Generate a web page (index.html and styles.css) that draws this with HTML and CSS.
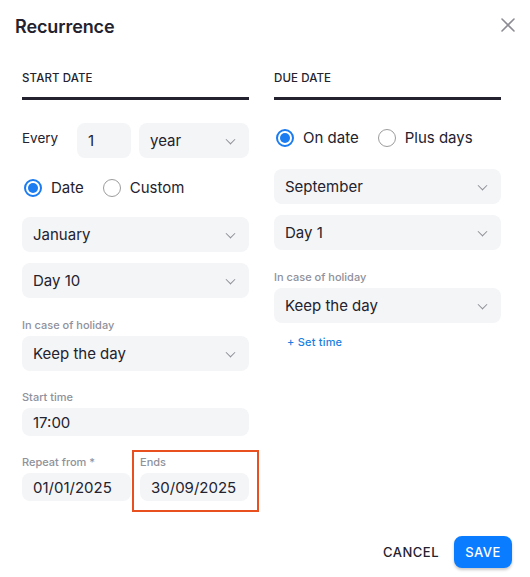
FILE: index.html
```html
<!DOCTYPE html>
<html>
<head>
<meta charset="utf-8">
<link rel="stylesheet" href="styles.css">
</head>
<body>
<div class="dialog">
  <header class="head">
    <h1 class="title">Recurrence</h1>
    <button class="close" aria-label="Close">
      <svg width="14" height="14" viewBox="0 0 14 14"><path d="M1 1L13 13M13 1L1 13" stroke="#8c8c94" stroke-width="1.6" stroke-linecap="round"/></svg>
    </button>
  </header>
  <main class="cols">
    <section class="col">
      <div class="tab">START DATE</div>
      <div class="every">
        <span class="every-label">Every</span>
        <div class="field num">1</div>
        <div class="field select">year<span class="chev"></span></div>
      </div>
      <div class="radios r-left">
        <label class="radio"><span class="dot on"></span>Date</label>
        <label class="radio"><span class="dot"></span>Custom</label>
      </div>
      <div class="field select s-jan">January<span class="chev"></span></div>
      <div class="field select s-day">Day 10<span class="chev"></span></div>
      <div class="lbl l1">In case of holiday</div>
      <div class="field select">Keep the day<span class="chev"></span></div>
      <div class="lbl l2">Start time</div>
      <div class="field small">17:00</div>
      <div class="pair">
        <div class="cell">
          <div class="lbl">Repeat from *</div>
          <div class="field small">01/01/2025</div>
        </div>
        <div class="cell ends">
          <div class="lbl">Ends</div>
          <div class="field small">30/09/2025</div>
          <div class="mark"></div>
        </div>
      </div>
    </section>
    <section class="col">
      <div class="tab">DUE DATE</div>
      <div class="radios r-right">
        <label class="radio"><span class="dot on"></span>On date</label>
        <label class="radio"><span class="dot"></span>Plus days</label>
      </div>
      <div class="field select s-sep">September<span class="chev"></span></div>
      <div class="field select s-day">Day 1<span class="chev"></span></div>
      <div class="lbl l1">In case of holiday</div>
      <div class="field select">Keep the day<span class="chev"></span></div>
      <a class="settime">+ Set time</a>
    </section>
  </main>
  <footer class="foot">
    <button class="btn cancel">CANCEL</button>
    <button class="btn save">SAVE</button>
  </footer>
</div>
</body>
</html>
```
FILE: styles.css
```css
* { box-sizing: border-box; }
html, body { margin: 0; padding: 0; background: #fff; }
body { font-family: Inter, "Noto Sans", sans-serif; color: #23222e; }
.dialog { width: 530px; height: 577px; display: flex; flex-direction: column; }
.head { height: 50px; display: flex; align-items: center; justify-content: space-between; padding: 3px 15px 0 15px; }
.title { margin: 0; font-size: 18px; font-weight: 600; letter-spacing: -0.1px; color: #23222e; line-height: 24px; }
.close { border: 0; background: none; padding: 0; width: 14px; height: 14px; display: flex; margin-top: -3px; }
.cols { flex: 1; display: grid; grid-template-columns: 227px 227px; column-gap: 25px; padding: 0 29px 0 22px; }
.col { display: flex; flex-direction: column; position: relative; }
.tab { font-size: 11.5px; font-weight: 500; letter-spacing: 0.1px; line-height: 14px; padding-top: 21px; padding-bottom: 12px; border-bottom: 3px solid #23222e; }
.field { background: #f4f5f7; border-radius: 8px; height: 35px; display: flex; align-items: center; padding: 0 11px; font-size: 15px; color: #23222e; position: relative; }
.field.small { height: 28px; }
.select .chev { position: absolute; right: 15px; top: 50%; width: 7px; height: 7px; border-right: 1.3px solid #8e8e96; border-bottom: 1.3px solid #8e8e96; transform: translateY(-70%) rotate(45deg); }
.every { display: flex; align-items: center; margin-top: 23px; }
.every-label { font-size: 13.5px; width: 55px; margin-bottom: 5px; }
.num { width: 54px; }
.every .select { flex: 1; margin-left: 8px; }
.radios { display: flex; align-items: center; height: 18px; }
.r-left { margin-top: 21px; }
.r-right { margin-top: 29px; }
.radio { display: flex; align-items: center; font-size: 15px; margin-right: 17px; line-height: 18px; }
.dot { width: 18px; height: 18px; border-radius: 50%; border: 1.5px solid #9c9c9c; margin-right: 9px; margin-left: 2px; position: relative; }
.dot.on { border: 2px solid #1a7cf0; }
.dot.on::after { content: ""; position: absolute; left: 2px; top: 2px; width: 10px; height: 10px; border-radius: 50%; background: #1a7cf0; }
.s-jan { margin-top: 20px; }
.s-sep { margin-top: 22px; }
.s-day { margin-top: 11px; }
.lbl { font-size: 11px; font-weight: 500; color: #8f919b; line-height: 14px; margin-bottom: 4px; }
.l1 { margin-top: 20px; }
.l2 { margin-top: 19px; }
.pair { display: grid; grid-template-columns: 1fr 1fr; column-gap: 9px; margin-top: 19px; }
.cell { position: relative; }
.mark { position: absolute; top: -5px; left: -8px; right: -10px; bottom: -11px; border: 2px solid #e8501f; }
.settime { margin-top: 12px; margin-left: 13px; font-size: 11px; font-weight: 500; color: #1a7fe0; line-height: 14px; letter-spacing: 0.2px; }
.foot { display: flex; justify-content: flex-end; align-items: center; padding: 0 18px 9px 0; }
.btn { font-family: Inter, "Noto Sans", sans-serif; font-size: 13px; font-weight: 500; letter-spacing: 0.5px; border: 0; background: none; cursor: pointer; }
.cancel { color: #23222e; padding: 0; margin-right: 15px; }
.save { background: #0a7cff; color: #fff; height: 32px; width: 58px; border-radius: 8px; box-shadow: 0 2px 3px rgba(0,0,0,0.22); padding: 0; }
```
